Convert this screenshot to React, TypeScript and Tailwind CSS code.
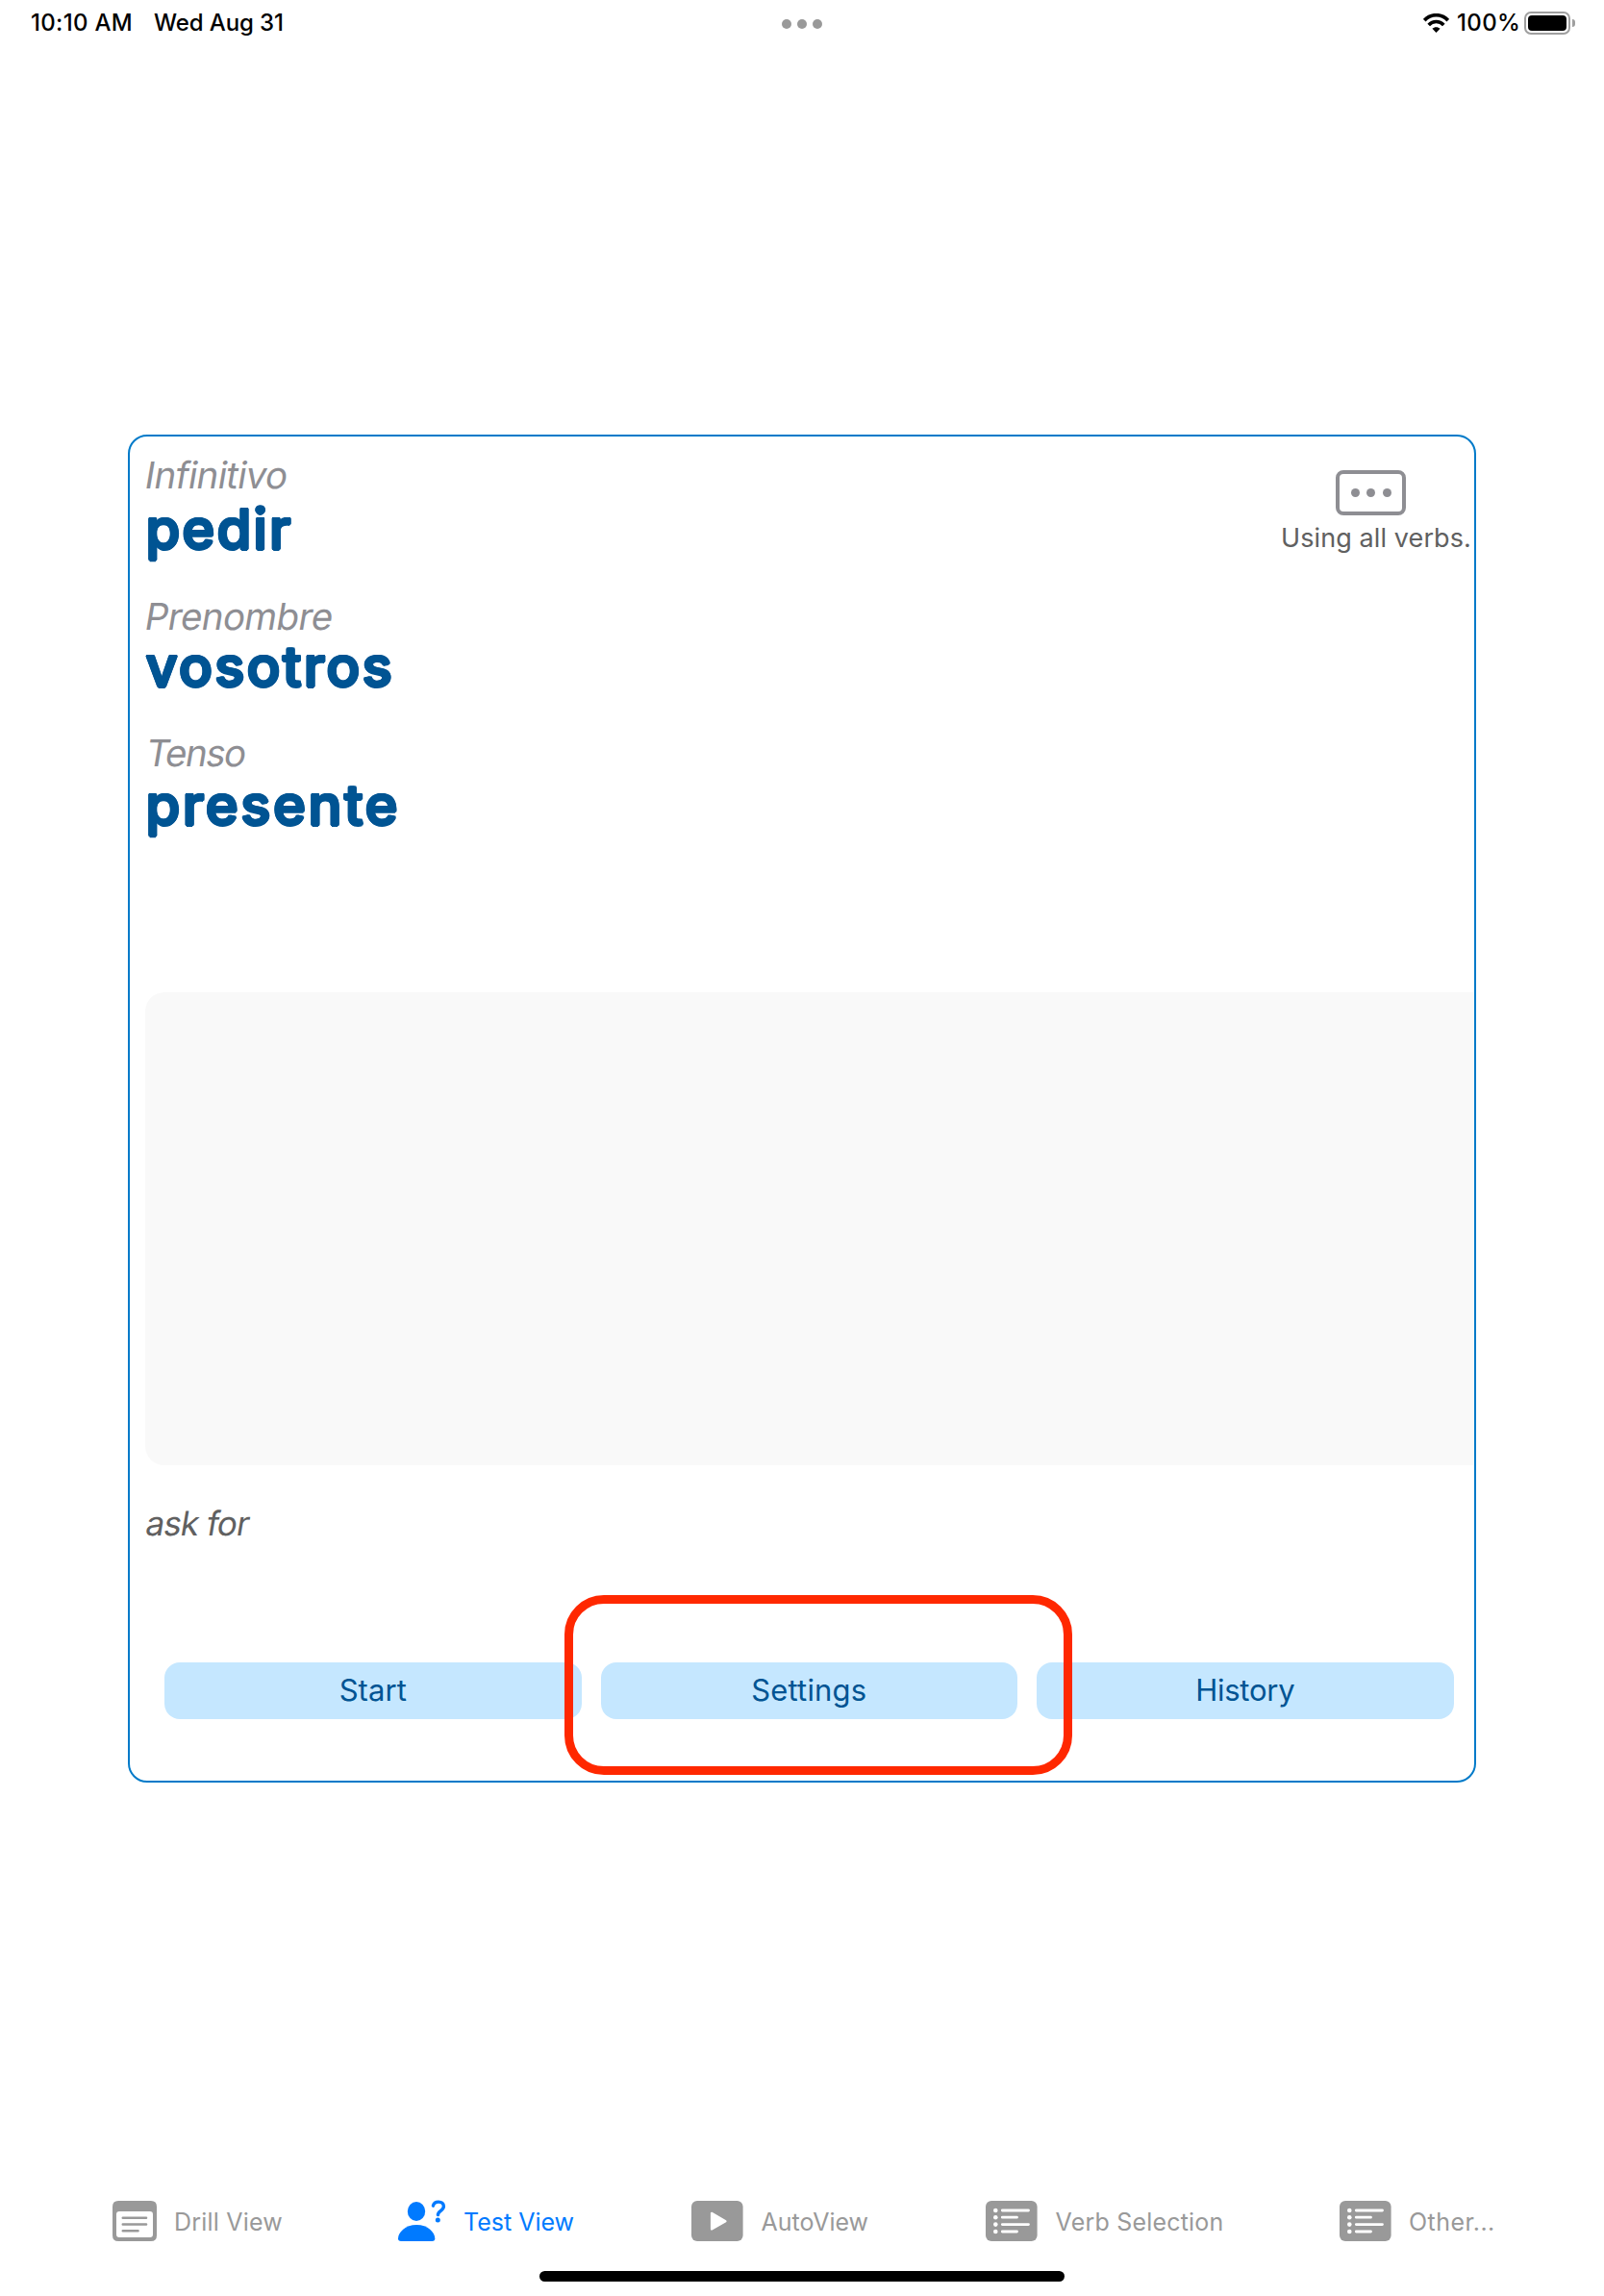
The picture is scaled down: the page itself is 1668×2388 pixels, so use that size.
import type { ReactNode } from 'react';

function StatusBar() {
  return (
    <header className="relative flex h-[50px] items-start justify-between pr-[30px] pl-8 text-[24px] leading-[48px] font-medium text-black">
      <div className="flex">
        <span className="w-[128px] tracking-[0.3px]">10:10 AM</span>
        <span className="tracking-[-0.11px]">Wed Aug 31</span>
      </div>
      <div className="absolute top-5 left-[813px] flex gap-1.5">
        <i className="size-2.5 rounded-full bg-[#999]" />
        <i className="size-2.5 rounded-full bg-[#999]" />
        <i className="size-2.5 rounded-full bg-[#999]" />
      </div>
      <div className="flex">
        <svg className="mt-[14px] h-5 w-[27px]" viewBox="0 0 27 20" fill="none" stroke="#000" strokeWidth="3.6">
          <path d="M1.2 7.2C8-.2 19-.2 25.800 7.200" />
          <path d="M5.700 11.900C10 7.300 17 7.300 21.300 11.900" />
          <path d="M13.500 20 9.400 15.800C11.700 13.600 15.300 13.600 17.600 15.800Z" fill="#000" stroke="none" />
        </svg>
        <span className="ml-2 w-[70px] tracking-[0.35px]">100%</span>
        <div className="mt-3 flex h-6 items-center">
          <div className="h-6 w-12 rounded-[7px] border-2 border-[#9f9f9f] p-0.5">
            <div className="h-full rounded-[4px] bg-black" />
          </div>
          <div className="ml-0.5 h-2 w-[3px] rounded-r-full bg-[#9f9f9f]" />
        </div>
      </div>
    </header>
  );
}

// Softens the corners of the heavy words by spreading the ink evenly in a small circle.
const roundedInk =
  '[text-shadow:1.5px_0_#005493,-1.5px_0_#005493,0_1.5px_#005493,0_-1.5px_#005493,1.1px_1.1px_#005493,-1.1px_1.1px_#005493,1.1px_-1.1px_#005493,-1.1px_-1.1px_#005493]';

function Field({ label, labelClass, className, children }: { label: string; labelClass: string; className: string; children: ReactNode }) {
  return (
    <div className={className}>
      <div className={`h-10 w-fit origin-[0_34px] -skew-x-[9.6deg] text-[38.5px] leading-10 text-[#8e8e93] ${labelClass}`}>{label}</div>
      {children}
    </div>
  );
}

function Word({ children, className }: { children: string; className: string }) {
  return (
    <div className={`h-16 pl-[0.5px] text-[58px] leading-[64px] font-medium text-[#005493] ${roundedInk} ${className}`}>{children}</div>
  );
}

function ActionButton({ children, className }: { children: string; className: string }) {
  return (
    <button className={`h-[59px] flex-1 rounded-[16px] bg-[#c5e7ff] pb-0.5 text-[31px] leading-[57px] text-[#005493] ${className}`}>
      {children}
    </button>
  );
}

function ListIcon() {
  return (
    <svg className="h-[42px] w-[54px]" viewBox="0 0 54 42">
      <rect width="53.600" height="42" rx="6" fill="#999" />
      <g fill="#fff">
        <circle cx="10.300" cy="10" r="2.300" />
        <circle cx="10.300" cy="17.200" r="2.300" />
        <circle cx="10.300" cy="24.600" r="2.300" />
        <circle cx="10.300" cy="32" r="2.300" />
      </g>
      <path d="M17.300 10H44.500M17.300 17.200H32.500M17.300 24.600H44.500M17.300 32H32.500" stroke="#fff" strokeWidth="2.800" strokeLinecap="round" />
    </svg>
  );
}

function Tab({ icon, label, className, textClass }: { icon: ReactNode; label: string; className: string; textClass: string }) {
  return (
    <div className={`flex h-[42px] items-center whitespace-nowrap ${className}`}>
      {icon}
      <span className={`pt-0.5 text-[25px] leading-[42px] ${textClass}`}>{label}</span>
    </div>
  );
}

function TabBar() {
  return (
    <nav className="flex pl-[117px]">
      <Tab
        className="w-[297px]"
        textClass="ml-[18px] tracking-[0.2px] text-[#999]"
        label="Drill View"
        icon={
          <svg className="h-[42px] w-[46px]" viewBox="0 0 46 42">
            <path fillRule="evenodd" fill="#999" d="M6 0H40Q46 0 46 6V36Q46 42 40 42H6Q0 42 0 36V6Q0 0 6 0ZM7 11Q4 11 4 14V35Q4 38 7 38H39Q42 38 42 35V14Q42 11 39 11Z" />
            <path d="M10.800 17.700H35M10.800 24.500H35M10.800 31.300H26.500" stroke="#999" strokeWidth="2.600" strokeLinecap="round" />
          </svg>
        }
      />
      <Tab
        className="w-[305px]"
        textClass="ml-[18px] text-[#007aff]"
        label="Test View"
        icon={
          <svg className="h-[42px] w-[50px] overflow-visible" viewBox="0 0 50 42" fill="#007aff">
            <ellipse cx="19" cy="11" rx="9.200" ry="10" />
            <path d="M3 42C1 42 0 41 0 39.200C0 33 7.500 25 19.200 25S38.300 33 38.300 39.200C38.300 41 37.400 42 35.400 42Z" />
            <path d="M36.400 5.200C37 2.600 39 1.100 42 1.100C45.200 1.100 47.400 2.900 47.400 5.800C47.400 10.400 41.500 10.200 41.400 14.600" fill="none" stroke="#007aff" strokeWidth="3.400" strokeLinecap="round" />
            <circle cx="41.300" cy="20" r="2.500" />
          </svg>
        }
      />
      <Tab
        className="w-[306px]"
        textClass="ml-[18.500px] text-[#999]"
        label="AutoView"
        icon={
          <svg className="h-[42px] w-[54px]" viewBox="0 0 54 42">
            <rect width="53.600" height="42" rx="6" fill="#999" />
            <path d="M21 12.800V29.600L35.500 21.200Z" fill="#fff" stroke="#fff" strokeWidth="2.200" strokeLinejoin="round" />
          </svg>
        }
      />
      <Tab className="w-[368px]" textClass="ml-[18.500px] tracking-[0.2px] text-[#999]" label="Verb Selection" icon={<ListIcon />} />
      <Tab className="w-[170px]" textClass="ml-[18px] tracking-[0.45px] text-[#999]" label="Other..." icon={<ListIcon />} />
    </nav>
  );
}

function Card() {
  return (
    <main className="relative mt-[402px] ml-[133px] flex h-[1402px] w-[1402px] flex-col rounded-[20px] border-2 border-[#007ac9] pl-4">
      <div className="flex items-start justify-between pt-5">
        <div>
          <Field label="Infinitivo" labelClass="-ml-[2.500px] tracking-[-0.7px]" className="">
            <Word className="mt-[4px] tracking-[2px]">pedir</Word>
          </Field>
          <Field label="Prenombre" labelClass="-ml-[2.500px] tracking-[-0.62px]" className="mt-[39px]">
            <Word className="tracking-[2.2px]">vosotros</Word>
          </Field>
          <Field label="Tenso" labelClass="-ml-[1.500px] tracking-[-1.5px]" className="mt-[38px]">
            <Word className="mt-[2px] tracking-[2.5px]">presente</Word>
          </Field>
        </div>
        <div className="mt-[15px] w-[201px]">
          <div className="ml-[57px] flex h-[47px] w-[73px] items-center justify-center gap-[7.500px] rounded-[8px] border-4 border-[#8e8e93]">
            <i className="size-[9px] rounded-full bg-[#8e8e93]" />
            <i className="size-[9px] rounded-full bg-[#8e8e93]" />
            <i className="size-[9px] rounded-full bg-[#8e8e93]" />
          </div>
          <div className="mt-[7px] text-[27px] leading-[34px] tracking-[0.1px] whitespace-nowrap text-[#606060]">Using all verbs.</div>
        </div>
      </div>
      <div className="mt-[163px] h-[492px] rounded-l-[20px] bg-[#f9f9f9]" />
      <div className="mt-10 -ml-px h-10 w-fit origin-[0_33px] -skew-x-[9.6deg] text-[35px] leading-10 tracking-[-0.95px] text-[#606060]">ask for</div>
      <div className="mt-[125px] mr-[21.500px] ml-5 flex gap-5">
        <ActionButton className="tracking-[0.06px]">Start</ActionButton>
        <ActionButton className="tracking-[0.17px]">Settings</ActionButton>
        <ActionButton className="tracking-[-0.25px]">History</ActionButton>
      </div>
      <div className="pointer-events-none absolute top-[1205px] left-[452px] h-[187px] w-[528px] rounded-[41px] border-9 border-[#ff2800]" />
    </main>
  );
}

export default function App() {
  return (
    <div className="flex h-[2388px] w-[1668px] flex-col overflow-hidden bg-white font-['Inter',sans-serif]">
      <StatusBar />
      <Card />
      <div className="mt-[435px]">
        <TabBar />
      </div>
      <div className="mt-[31px] ml-[561px] h-[11px] w-[546px] rounded-full bg-black" />
    </div>
  );
}
